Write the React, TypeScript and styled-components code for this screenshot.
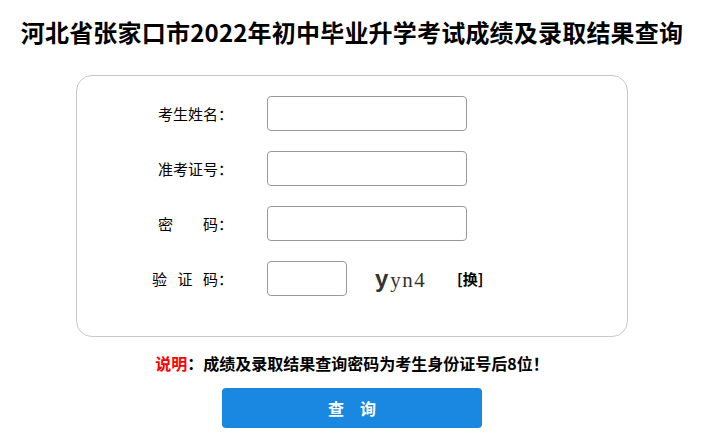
import React from 'react';
import styled, { createGlobalStyle } from 'styled-components';

const GlobalStyle = createGlobalStyle`
  body {
    margin: 0;
    background: #fff;
    font-family: "Noto Sans CJK SC", "Noto Sans", sans-serif;
    color: #000;
  }
`;

const Page = styled.div`
  width: 704px;
  display: flex;
  flex-direction: column;
  align-items: center;
`;

const Title = styled.h1`
  margin: 15px 0 0 0;
  height: 34px;
  line-height: 34px;
  font-size: 24px;
  letter-spacing: 0.2px;
  font-weight: 700;
  color: #000;
`;

const Card = styled.div`
  box-sizing: border-box;
  width: 552px;
  margin-top: 26px;
  padding: 20px 0 40px 0;
  border: 1px solid #c8c8c8;
  border-radius: 16px;
  display: flex;
  flex-direction: column;
  gap: 20px;
`;

const Row = styled.div`
  display: flex;
  align-items: center;
  height: 35px;
`;

const Label = styled.label`
  width: 156px;
  text-align: right;
  padding-right: 34px;
  font-size: 15px;
  color: #000;
  white-space: pre;
`;

const Input = styled.input<{ $w?: number }>`
  box-sizing: border-box;
  width: ${p => p.$w ?? 200}px;
  height: 35px;
  border: 1px solid #999;
  border-radius: 4px;
  outline: none;
  background: #fff;
`;

const Captcha = styled.div`
  margin-left: 28px;
  width: 62px;
  display: flex;
  align-items: baseline;
  color: #333;
`;

const CapBig = styled.span`
  font-family: "Liberation Sans", sans-serif;
  font-weight: 700;
  font-size: 24px;
  margin-right: 2px;
`;

const CapSmall = styled.span`
  font-family: "Liberation Serif", serif;
  font-size: 21px;
  letter-spacing: 1.5px;
`;

const Swap = styled.a`
  margin-left: 20px;
  font-size: 15px;
  font-weight: 700;
  color: #000;
  cursor: pointer;
`;

const Note = styled.p`
  margin: 16px 0 0 0;
  font-size: 16px;
  line-height: 20px;
  font-weight: 700;
`;

const Red = styled.span`
  color: #f00;
`;

const Button = styled.button`
  margin-top: 15px;
  width: 260px;
  height: 40px;
  border: none;
  border-radius: 4px;
  background: #1a88e0;
  color: #fff;
  font-family: "Noto Sans CJK SC", sans-serif;
  font-size: 16px;
  font-weight: 700;
  cursor: pointer;
`;

export default function App() {
  return (
    <>
      <GlobalStyle />
      <Page>
        <Title>河北省张家口市2022年初中毕业升学考试成绩及录取结果查询</Title>
        <Card>
          <Row>
            <Label>考生姓名：</Label>
            <Input type="text" />
          </Row>
          <Row>
            <Label>准考证号：</Label>
            <Input type="text" />
          </Row>
          <Row>
            <Label>{'密\u3000\u3000码：'}</Label>
            <Input type="password" />
          </Row>
          <Row>
            <Label>{'验\u2002\u2009证\u2002\u2009码：'}</Label>
            <Input type="text" $w={80} />
            <Captcha>
              <CapBig>y</CapBig>
              <CapSmall>yn4</CapSmall>
            </Captcha>
            <Swap>[换]</Swap>
          </Row>
        </Card>
        <Note>
          <Red>说明</Red>：成绩及录取结果查询密码为考生身份证号后8位！
        </Note>
        <Button>{'查\u3000询'}</Button>
      </Page>
    </>
  );
}
